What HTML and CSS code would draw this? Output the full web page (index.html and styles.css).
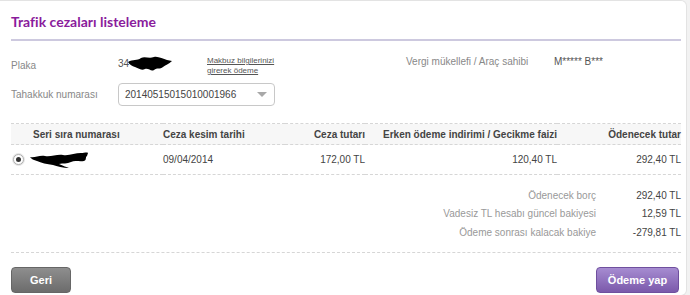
FILE: index.html
```html
<!DOCTYPE html>
<html lang="tr">
<head>
	<meta charset="UTF-8">
	<title>Trafik cezaları listeleme</title>
	<link rel="stylesheet" href="styles.css">
</head>
<body>
	<div class="card">
		<div class="title">Trafik cezaları listeleme</div>
		<div class="info">
			<div class="info-row">
				<span class="label plaka">Plaka</span>
				<span class="plate">34<svg class="blot" width="46" height="16" viewBox="0 0 46 16"><path d="M1 6 C6 3 10 5 14 2 C18 0 22 3 27 1 C31 0 36 3 40 4 L45 5 C42 8 38 9 36 11 C33 14 30 11 27 14 C24 16 22 12 18 13 C14 15 11 12 8 11 C5 10 3 9 1 6 Z" fill="#000"/></svg></span>
				<a class="receipt" href="#">Makbuz bilgilerinizi<br>girerek ödeme</a>
				<span class="label owner">Vergi mükellefi / Araç sahibi</span>
				<span class="value">M***** B***</span>
			</div>
			<div class="info-row second">
				<span class="label">Tahakkuk numarası</span>
				<div class="select"><span>20140515015010001966</span><i class="arrow"></i></div>
			</div>
		</div>
		<table class="fines">
			<colgroup>
				<col style="width:152px"><col style="width:122px"><col style="width:80px"><col style="width:192px"><col style="width:124px">
			</colgroup>
			<thead>
				<tr>
					<th class="first">Seri sıra numarası</th>
					<th class="left">Ceza kesim tarihi</th>
					<th>Ceza tutarı</th>
					<th>Erken ödeme indirimi / Gecikme faizi</th>
					<th>Ödenecek tutar</th>
				</tr>
			</thead>
			<tbody>
				<tr>
					<td class="first"><span class="radio"></span><svg class="blot" width="60" height="16" viewBox="0 0 60 16"><path d="M1 5 C6 6 10 3 16 4 C22 5 28 2 34 3 C40 4 46 1 52 1 C55 1 58 0 59 1 L58 4 C56 5 58 8 55 9 C50 10 46 8 42 10 C38 12 34 11 30 12 C34 14 38 15 40 16 C34 16 28 14 24 13 C18 12 12 11 8 9 C5 8 2 7 1 5 Z" fill="#000"/></svg></td>
					<td class="left">09/04/2014</td>
					<td>172,00 TL</td>
					<td>120,40 TL</td>
					<td>292,40 TL</td>
				</tr>
			</tbody>
		</table>
		<div class="summary">
			<div class="sum-row"><span class="sum-label">Ödenecek borç</span><span class="sum-value">292,40 TL</span></div>
			<div class="sum-row"><span class="sum-label">Vadesiz TL hesabı güncel bakiyesi</span><span class="sum-value">12,59 TL</span></div>
			<div class="sum-row"><span class="sum-label">Ödeme sonrası kalacak bakiye</span><span class="sum-value">-279,81 TL</span></div>
		</div>
		<div class="ctrl">
			<span class="btn back">Geri</span>
			<span class="btn pay">Ödeme yap</span>
		</div>
	</div>
</body>
</html>
```
FILE: styles.css
```css
body{margin: 0; background: #f2f2f2; font-family: "Liberation Sans", Arial, sans-serif; font-size: 10px; color: #444;}
.card{width: 670px; height: 294px; background: #fff; border: 1px solid #e3e3e3; border-left: none; border-radius: 0 6px 6px 0; padding: 0 5px 0 11px; box-sizing: content-box;}
.title{height: 38px; line-height: 42px; border-bottom: 2px solid #cdc9df; font-family: Lato, sans-serif; font-weight: bold; font-size: 14px; color: #8a1c9c;}

.info{padding-top: 14px; height: 68px;}
.info-row{display: flex; align-items: flex-start; line-height: 12px;}
.info-row:first-child{height: 28px;}
.info-row.second{align-items: center;}
.label{width: 107px; color: #888; font-size: 10px;}
.plaka{margin-top: 5px;}
.plate{width: 89px; display: flex; align-items: center; color: #555; margin-top: 1px;}
.plate .blot{margin: 0 0 0 -2px;}
.receipt{font-size: 8px; line-height: 10px; color: #555; text-decoration: underline; width: 199px; margin-top: 1px;}
.owner{width: 148px; margin-top: 1px;}
.value{color: #555; margin-top: 1px;}
.select{width: 142px; height: 21px; border: 1px solid #c8c8c8; border-radius: 4px; display: flex; align-items: center; justify-content: space-between; padding: 0 7px 0 6px; box-sizing: content-box; color: #444;}
.arrow{width: 0; height: 0; border-left: 5px solid transparent; border-right: 5px solid transparent; border-top: 5px solid #a8a8a8;}

.fines{width: 670px; border-collapse: collapse; table-layout: fixed;}
.fines th, .fines td{text-align: right; padding: 0; white-space: nowrap;}
.fines th{height: 20px; background: #f7f7f7; font-weight: bold; color: #444; border-top: 1px dashed #d6d6d6; border-bottom: 1px dashed #d6d6d6;}
.fines td{height: 29px; color: #444; border-bottom: 1px dashed #d6d6d6;}
.fines .left{text-align: left;}
.fines th.first{text-align: left; padding-left: 22px;}
.fines td.first{text-align: left;}
.fines td.first .blot{vertical-align: middle; margin-left: 5px;}
.radio{display: inline-block; vertical-align: middle; width: 9px; height: 9px; margin-left: 2px; border: 1px solid #b0b0b0; border-radius: 50%; background: #fff; box-shadow: 0 0 0 1px #e6e6e6; position: relative;}
.radio:after{content: ""; position: absolute; left: 2px; top: 2px; width: 5px; height: 5px; border-radius: 50%; background: #333;}

.summary{padding: 11px 0 10px 0; border-bottom: 1px dashed #d6d6d6; width: 670px;}
.sum-row{display: flex; justify-content: flex-end; height: 18.5px; align-items: center;}
.sum-label{color: #999;}
.sum-value{width: 85px; text-align: right; color: #444;}

.ctrl{display: flex; justify-content: space-between; padding-top: 14px; width: 668px;}
.btn{display: block; height: 24px; line-height: 24px; border-radius: 4px; color: #fff; font-weight: bold; font-size: 11px; text-align: center; cursor: pointer;}
.back{width: 58px; background: linear-gradient(#8e8e8e, #6c6c6c); border: 1px solid #666;}
.pay{width: 81px; background: linear-gradient(#a68cd1, #7b59ab); border: 1px solid #6f4f9e;}
```
